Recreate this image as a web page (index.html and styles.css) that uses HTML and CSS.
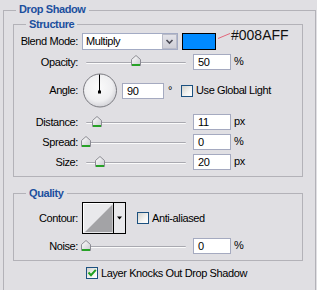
FILE: index.html
```html
<!DOCTYPE html>
<html>
<head>
<meta charset="utf-8">
<link rel="stylesheet" href="styles.css">
</head>
<body>
<div class="group outer">
  <span class="title">Drop Shadow</span>
  <div class="group structure">
    <span class="title">Structure</span>
    <div class="row row-blend">
      <span class="lbl">Blend Mode:</span>
      <div class="select">
        <span class="select-text">Multiply</span>
        <span class="select-btn"><svg width="13" height="13" viewBox="0 0 13 13"><path d="M3.5 5 L6.5 8 L9.5 5" fill="none" stroke="#4a4a55" stroke-width="1.6"/></svg></span>
      </div>
      <div class="swatch"></div>
      <svg class="pointer" width="15" height="17" viewBox="0 0 15 17"><line x1="2" y1="5.5" x2="14" y2="0.5" stroke="#e2677b" stroke-width="1"/></svg>
      <span class="hex">#008AFF</span>
    </div>
    <div class="row row-opacity">
      <span class="lbl">Opacity:</span>
      <div class="slider"><span class="track"></span><svg class="thumb" style="left:49px" width="10" height="11" viewBox="0 0 10 11"><use href="#thumb"/></svg></div>
      <div class="input">50</div>
      <span class="unit">%</span>
    </div>
    <div class="row row-angle">
      <span class="lbl">Angle:</span>
      <svg class="dial" width="36" height="35" viewBox="0 0 36 35">
        <defs>
          <radialGradient id="dialg" cx="0.45" cy="0.4" r="0.6">
            <stop offset="0" stop-color="#fbfbfb"/>
            <stop offset="0.7" stop-color="#efeff1"/>
            <stop offset="1" stop-color="#d4d4d9"/>
          </radialGradient>
        </defs>
        <circle cx="18" cy="17.5" r="16.5" fill="url(#dialg)" stroke="#7a7a80" stroke-width="1"/>
        <line x1="17.5" y1="1.5" x2="17.5" y2="19" stroke="#000" stroke-width="1"/>
        <rect x="16" y="17.5" width="3" height="3" fill="#000"/>
      </svg>
      <div class="input input-wide">90</div>
      <span class="deg">°</span>
      <span class="cb cb-global"></span>
      <span class="cb-text">Use Global Light</span>
    </div>
    <div class="row row-distance">
      <span class="lbl">Distance:</span>
      <div class="slider"><span class="track"></span><svg class="thumb" style="left:10px" width="10" height="11" viewBox="0 0 10 11"><use href="#thumb"/></svg></div>
      <div class="input">11</div>
      <span class="unit">px</span>
    </div>
    <div class="row row-spread">
      <span class="lbl">Spread:</span>
      <div class="slider"><span class="track"></span><svg class="thumb" style="left:-1px" width="10" height="11" viewBox="0 0 10 11"><use href="#thumb"/></svg></div>
      <div class="input">0</div>
      <span class="unit">%</span>
    </div>
    <div class="row row-size">
      <span class="lbl">Size:</span>
      <div class="slider"><span class="track"></span><svg class="thumb" style="left:13px" width="10" height="11" viewBox="0 0 10 11"><use href="#thumb"/></svg></div>
      <div class="input">20</div>
      <span class="unit">px</span>
    </div>
  </div>

  <div class="group quality">
    <span class="title">Quality</span>
    <div class="row row-contour">
      <span class="lbl">Contour:</span>
      <svg class="contour" width="44" height="32" viewBox="0 0 44 32">
        <rect x="0.5" y="0.5" width="43" height="31" fill="#e9e9ec" stroke="#000"/>
        <line x1="1.5" y1="1.5" x2="30.5" y2="1.5" stroke="#fff"/>
        <line x1="1.5" y1="1.5" x2="1.5" y2="30.5" stroke="#fff"/>
        <polygon points="3,30 30.5,2.5 30.5,30" fill="#a3a3a6"/>
        <line x1="31.5" y1="0" x2="31.5" y2="32" stroke="#000"/>
        <polygon points="35,14.5 40,14.5 37.5,17.5" fill="#000"/>
      </svg>
      <span class="cb cb-anti"></span>
      <span class="cb-text">Anti-aliased</span>
    </div>
    <div class="row row-noise">
      <span class="lbl">Noise:</span>
      <div class="slider"><span class="track"></span><svg class="thumb" style="left:-1px" width="10" height="11" viewBox="0 0 10 11"><use href="#thumb"/></svg></div>
      <div class="input">0</div>
      <span class="unit">%</span>
    </div>
  </div>

  <div class="row row-knock">
    <span class="cb cb-checked"><svg width="10" height="10" viewBox="0 0 10 10"><path d="M1.5 4.5 L4 7.2 L8.8 1.8" fill="none" stroke="#21a121" stroke-width="2"/></svg></span>
    <span class="cb-text">Layer Knocks Out Drop Shadow</span>
  </div>
</div>

<svg class="defs" width="0" height="0">
  <defs>
    <linearGradient id="thumbg" x1="0" y1="0" x2="1" y2="1">
      <stop offset="0" stop-color="#ffffff"/>
      <stop offset="1" stop-color="#c9c9cf"/>
    </linearGradient>
    <g id="thumb">
      <path d="M0.5 4.5 L5 0.5 L9.5 4.5 L9.5 10.5 L0.5 10.5 Z" fill="url(#thumbg)" stroke="#8c8c94" stroke-width="1"/>
      <rect x="1" y="9" width="8" height="2" fill="#27a227"/>
    </g>
  </defs>
</svg>
</body>
</html>
```

FILE: styles.css
```css
html, body {
  margin: 0;
  padding: 0;
}

body {
  width: 317px;
  height: 290px;
  overflow: hidden;
  background: #e0dfe3;
  font-family: "Liberation Sans", Arial, sans-serif;
  font-size: 11px;
  letter-spacing: -0.4px;
  color: #000;
}

.defs {
  position: absolute;
  width: 0;
  height: 0;
}

.group {
  position: relative;
  box-sizing: border-box;
  border: 1px solid #b3b2b8;
}

.title {
  position: absolute;
  left: 12px;
  top: -7px;
  padding: 0 3px;
  background: #e0dfe3;
  font-weight: bold;
  color: #1c4f9e;
  line-height: 13px;
}

.outer {
  margin: 10px 0 0 3px;
  width: 313px;
  height: 280px;
  padding: 13px 12px 0 9px;
  border-bottom: none;
}

.outer > .title {
  top: -8px;
}

.structure {
  width: 290px;
  padding: 8px 0 6px 0;
}

.quality {
  width: 290px;
  margin-top: 16px;
  padding: 8px 0 6px 0;
}

.row {
  display: flex;
  align-items: center;
  height: 16px;
}

.lbl {
  width: 64px;
  flex: none;
  text-align: right;
  line-height: 13px;
}

.row-blend { height: 17px; }
.row-opacity { margin-top: 4px; }
.row-angle { margin-top: 3px; height: 35px; }
.row-distance { margin-top: 6px; }
.row-spread { margin-top: 4px; }
.row-size { margin-top: 4px; }
.row-contour { height: 32px; }
.row-noise { margin-top: 4px; }

.row-knock {
  margin-top: 6px;
  margin-left: 73px;
  height: 12px;
}

/* select */
.select {
  margin-left: 4px;
  width: 96px;
  height: 17px;
  box-sizing: border-box;
  border: 1px solid #a3abc4;
  background: #fff;
  display: flex;
  align-items: center;
  justify-content: space-between;
}

.select-text {
  padding-left: 3px;
  line-height: 13px;
}

.select-btn {
  width: 15px;
  height: 15px;
  box-sizing: border-box;
  border: 1px solid #b9bbc8;
  background: linear-gradient(#e3e3e9, #cfcfd7);
  display: flex;
  align-items: center;
  justify-content: center;
}

.swatch {
  margin-left: 4px;
  width: 34px;
  height: 17px;
  box-sizing: border-box;
  border: 1px solid #000;
  background: #008aff;
}

.pointer {
  flex: none;
  align-self: flex-start;
}

.hex {
  align-self: flex-start;
  margin-top: -6px;
  font-size: 14px;
  line-height: 16px;
  letter-spacing: 0;
  color: #111;
}

/* slider */
.slider {
  position: relative;
  margin-left: 4px;
  width: 107px;
  height: 16px;
  flex: none;
}

.track {
  position: absolute;
  left: 4px;
  top: 8px;
  width: 100px;
  height: 2px;
  box-sizing: border-box;
  border-top: 1px solid #a9a9b0;
  background: #fbfbfb;
  border-radius: 1px;
}

.thumb {
  position: absolute;
  top: 1px;
}

.row-distance .thumb,
.row-spread .thumb,
.row-size .thumb,
.row-noise .thumb {
  top: 2px;
}

/* inputs */
.input {
  margin-left: 4px;
  width: 38px;
  height: 16px;
  box-sizing: border-box;
  border: 1px solid #a5aac0;
  background: #fff;
  padding-left: 4px;
  line-height: 14px;
  flex: none;
}

.input-wide {
  width: 42px;
}

.unit {
  align-self: flex-start;
  margin-left: 3px;
  margin-top: 1px;
  line-height: 13px;
}

.dial {
  margin-left: 4px;
  flex: none;
}

.deg {
  margin-left: 4px;
  line-height: 13px;
}

/* checkboxes */
.cb {
  width: 12px;
  height: 12px;
  box-sizing: border-box;
  border: 1px solid #1c5180;
  background: linear-gradient(135deg, #d2d2cd 0%, #f4f4f2 60%, #ffffff 100%);
  flex: none;
  display: flex;
  align-items: center;
  justify-content: center;
}

.cb-global {
  margin-left: 9px;
}

.cb-anti {
  margin-left: 11px;
}

.cb-text {
  margin-left: 3px;
  line-height: 13px;
  white-space: nowrap;
}

.contour {
  margin-left: 4px;
  flex: none;
}
```
